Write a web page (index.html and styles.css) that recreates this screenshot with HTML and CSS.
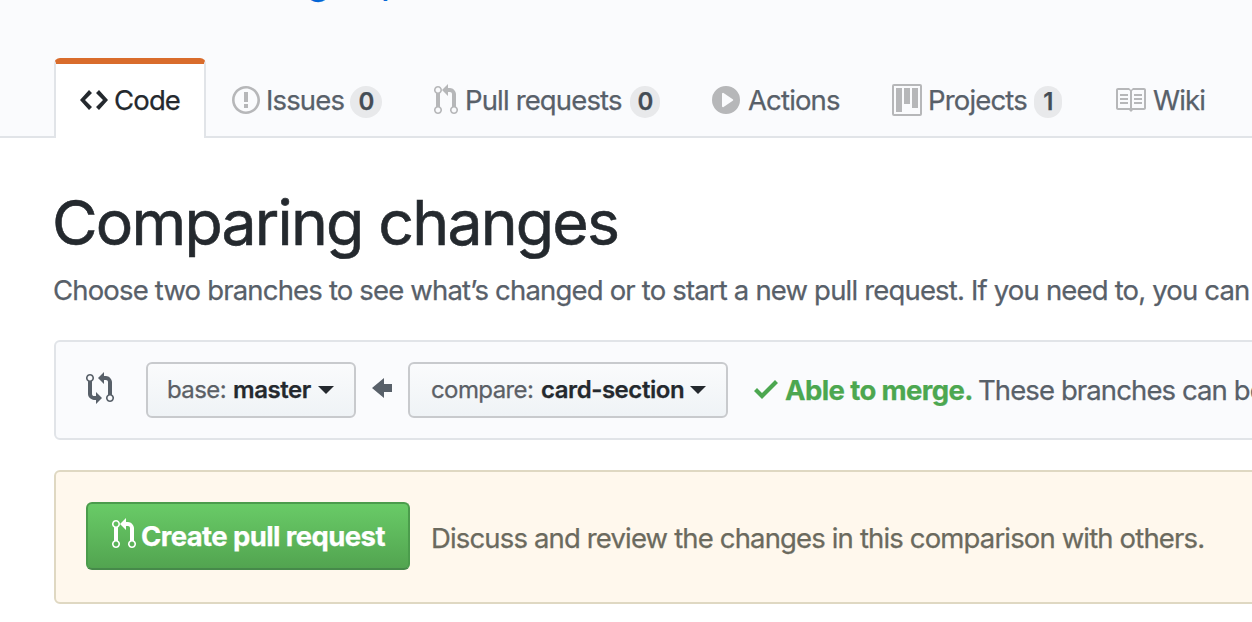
FILE: index.html
```
<!DOCTYPE html>
<html lang="en">
<head>
<meta charset="utf-8">
<title>Comparing changes</title>
<link rel="stylesheet" href="styles.css">
</head>
<body>
<svg class="defs" width="0" height="0">
  <symbol id="pr" viewBox="0 0 12 16"><path d="M11 11.28V5c-.03-.78-.34-1.47-.94-2.06C9.46 2.35 8.78 2.03 8 2H7V0L4 3l3 3V4h1c.27.02.48.11.69.31.21.2.3.42.31.69v6.28A1.993 1.993 0 0 0 10 15a1.993 1.993 0 0 0 1-3.72zm-1 2.92c-.66 0-1.2-.55-1.2-1.2 0-.65.55-1.2 1.2-1.2.65 0 1.2.55 1.2 1.2 0 .65-.55 1.2-1.2 1.2zM4 3c0-1.11-.89-2-2-2a1.993 1.993 0 0 0-1 3.72v6.56A1.993 1.993 0 0 0 2 15a1.993 1.993 0 0 0 1-3.72V4.72c.59-.34 1-.98 1-1.72zm-.8 10c0 .66-.55 1.2-1.2 1.2-.65 0-1.2-.55-1.2-1.2 0-.65.55-1.2 1.2-1.2.65 0 1.2.55 1.2 1.2zM2 4.2C1.34 4.2.8 3.65.8 3c0-.65.55-1.2 1.2-1.2.65 0 1.2.55 1.2 1.2 0 .65-.55 1.2-1.2 1.2z"/></symbol>
</svg>
<header class="repohead">
  <div class="repo-name"><a class="repo-owner">g</a><a>p</a></div>
  <nav class="tabs">
    <a class="tab tab-code selected"><svg width="28" height="32" viewBox="0 0 14 16"><path d="M9.5 3L8 4.5 11.5 8 8 11.5 9.5 13 14 8 9.5 3zm-5 0L0 8l4.5 5L6 11.5 2.5 8 6 4.5 4.5 3z"/></svg><span class="label">Code</span></a>
    <a class="tab tab-issues"><svg width="28" height="32" viewBox="0 0 14 16"><path d="M7 2.3c3.14 0 5.7 2.56 5.7 5.7s-2.56 5.7-5.7 5.7A5.71 5.71 0 0 1 1.3 8c0-3.14 2.56-5.7 5.7-5.7zM7 1C3.14 1 0 4.14 0 8s3.14 7 7 7 7-3.14 7-7-3.14-7-7-7zm1 3H6v5h2V4zm0 6H6v2h2v-2z"/></svg><span class="label">Issues</span><span class="counter">0</span></a>
    <a class="tab tab-pulls"><svg width="24" height="32"><use href="#pr"/></svg><span class="label">Pull requests</span><span class="counter">0</span></a>
    <a class="tab tab-actions"><svg width="28" height="32" viewBox="0 0 14 16"><path d="M14 8A7 7 0 1 1 0 8a7 7 0 0 1 14 0zm-8.223 3.482l4.599-3.066a.5.5 0 0 0 0-.832L5.777 4.518A.5.5 0 0 0 5 4.934v6.132a.5.5 0 0 0 .777.416z"/></svg><span class="label">Actions</span></a>
    <a class="tab tab-projects"><svg width="30" height="32" viewBox="0 0 15 16"><path fill-rule="evenodd" d="M10 12h3V2h-3v10zm-4-2h3V2H6v8zm-4 4h3V2H2v12zm-1 1h13V1H1v14zM14 0H1a1 1 0 0 0-1 1v14a1 1 0 0 0 1 1h13a1 1 0 0 0 1-1V1a1 1 0 0 0-1-1z" transform="matrix(1 0 0 1 0 0)"/></svg><span class="label">Projects</span><span class="counter">1</span></a>
    <a class="tab tab-wiki"><svg width="32" height="32" viewBox="0 0 16 16"><path d="M3 5h4v1H3V5zm0 3h4V7H3v1zm0 2h4V9H3v1zm11-5h-4v1h4V5zm0 2h-4v1h4V7zm0 2h-4v1h4V9zm2-6v9c0 .55-.45 1-1 1H9.5l-1 1-1-1H2c-.55 0-1-.45-1-1V3c0-.55.45-1 1-1h5.5l1 1 1-1H15c.55 0 1 .45 1 1zm-8 .5L7.5 3H2v9h6V3.5zm7-.5H9.5l-.5.5V12h6V3z"/></svg><span class="label">Wiki</span></a>
  </nav>
</header>
<main class="content">
  <h1 class="title">Comparing changes</h1>
  <p class="subtitle">Choose two branches to see what’s changed or to start a new pull request. If you need to, you can</p>
  <section class="range">
    <svg class="compare-icon" width="28" height="32" viewBox="0 0 14 16"><path d="M5 12H4c-.27-.02-.48-.11-.69-.31-.21-.2-.3-.42-.31-.69V4.72A1.993 1.993 0 0 0 2 1a1.993 1.993 0 0 0-1 3.72V11c.03.78.34 1.47.94 2.06.6.59 1.28.91 2.06.94h1v2l3-3-3-3v2zM2 1.8c.66 0 1.2.55 1.2 1.2 0 .65-.55 1.2-1.2 1.2C1.35 4.2.8 3.65.8 3c0-.65.55-1.2 1.2-1.2zm11 9.48V5c-.03-.78-.34-1.47-.94-2.06-.6-.59-1.28-.91-2.06-.94H9V0L6 3l3 3V4h1c.27.02.48.11.69.31.21.2.3.42.31.69v6.28A1.993 1.993 0 0 0 12 15a1.993 1.993 0 0 0 1-3.72zm-1 2.92c-.66 0-1.2-.55-1.2-1.2 0-.65.55-1.2 1.2-1.2.65 0 1.2.55 1.2 1.2 0 .65-.55 1.2-1.2 1.2z"/></svg>
    <button class="select base"><span class="key">base:</span><b>master</b><i class="caret"></i></button>
    <svg class="arrow" width="20" height="32" viewBox="0 0 10 16"><path d="M6 3L0 8l6 5v-3h4V6H6V3z"/></svg>
    <button class="select compare"><span class="key">compare:</span><b>card-section</b><i class="caret"></i></button>
    <div class="merge"><svg width="24" height="32" viewBox="0 0 12 16"><path d="M12 5l-8 8-4-4 1.5-1.5L4 10l6.5-6.5L12 5z"/></svg><strong>Able to merge.</strong><span class="merge-note">These branches can be</span></div>
  </section>
  <section class="create">
    <button class="primary"><svg width="24" height="32"><use href="#pr"/></svg><span>Create pull request</span></button>
    <p class="hint">Discuss and review the changes in this comparison with others.</p>
  </section>
</main>
</body>
</html>
```
FILE: styles.css
```
* { box-sizing: border-box; }
body {
  margin: 0;
  height: 622px;
  overflow: hidden;
  background: #fff;
  color: #586069;
  font-family: Inter, "Liberation Sans", sans-serif;
  font-size: 27.5px;
  letter-spacing: -0.85px;
  white-space: nowrap;
  -webkit-text-stroke: 0.25px currentColor;
}
svg { display: block; flex: none; fill: currentColor; }
.defs { position: absolute; }
h1, p { margin: 0; }
button { font: inherit; letter-spacing: inherit; }

.repohead {
  height: 138px;
  background: #fafbfd;
  border-bottom: 2px solid #e1e4e8;
}
.repo-name {
  display: flex;
  height: 58px;
  padding-left: 307px;
  overflow: hidden;
  color: #0366d6;
  font-size: 36px;
  line-height: 40px;
}
.repo-name a { margin-top: -39px; }
.repo-owner { width: 74px; font-weight: 500; }
.tabs { display: flex; height: 80px; padding-left: 54px; }
.tab { display: flex; flex: none; height: 80px; padding-top: 26px; }
.tab svg { fill: #b6b7b9; }
.label { line-height: 33px; }
.tab-code { width: 152px; padding-left: 24px; }
.selected {
  padding-top: 20px;
  border: 2px solid #e1e4e8;
  border-top: 6px solid #d96c2c;
  border-bottom: 0;
  border-radius: 6px 6px 0 0;
  background: #fff;
  color: #24292e;
}
.selected svg { fill: #24292e; }
.tab-code .label { margin-left: 6px; }
.tab-issues { width: 202px; padding-left: 26px; }
.tab-issues .label { width: 84px; margin-left: 6px; }
.tab-pulls { width: 278px; padding-left: 26px; }
.tab-pulls .label { width: 165px; margin-left: 7px; }
.tab-actions { width: 180px; padding-left: 26px; }
.tab-actions .label { margin-left: 8px; }
.tab-projects { width: 222px; padding-left: 26px; }
.tab-projects .label { width: 106px; margin-left: 6px; }
.tab-wiki { padding-left: 26px; }
.tab-wiki .label { margin-left: 7px; }
.counter {
  width: 32px;
  height: 32px;
  margin-top: 2px;
  border-radius: 16px;
  background: #e8e9eb;
  color: #444d56;
  font-size: 24px;
  font-weight: 600;
  line-height: 32px;
  text-align: center;
}
.tab-pulls .counter { width: 30px; }
.tab-projects .counter { width: 28px; }

.content { padding: 48px 0 0 54px; }
.title {
  height: 78px;
  margin-left: -2px;
  color: #24292e;
  font-size: 62.5px;
  font-weight: 400;
  line-height: 73px;
  letter-spacing: -1.8px;
  -webkit-text-stroke-width: 0.6px;
}
.subtitle { height: 42px; margin: 6px 0 28px -1px; line-height: 41px; letter-spacing: -0.825px; }
.range, .create {
  display: flex;
  width: 1240px;
  border: 2px solid #e1e4e8;
  border-radius: 6px;
}
.range { height: 100px; padding: 20px 0 0 30px; background: #fafbfd; }
.compare-icon { margin-top: 10px; }
.select {
  display: flex;
  flex: none;
  height: 56px;
  padding: 0 0 0 19px;
  border: 2px solid #c8cacd;
  border-radius: 6px;
  background: linear-gradient(#fafbfc, #eff3f6);
  color: #24292e;
  font-size: 24px;
  line-height: 51px;
  letter-spacing: -0.6px;
}
.select b { font-weight: 600; letter-spacing: -0.45px; }
.key { color: #5b6066; }
.base { width: 210px; margin-left: 32px; }
.base .key { width: 66px; text-align: left; }
.base b { width: 79px; text-align: left; }
.compare { width: 320px; margin-left: 16px; padding-left: 21px; }
.compare .key { width: 110px; text-align: left; }
.compare b { width: 143px; text-align: left; }
.caret {
  width: 0;
  height: 0;
  margin: 22px 0 0 6px;
  border: 8px solid transparent;
  border-top-color: #24292e;
  border-bottom: 0;
}
.arrow { margin: 10px 0 0 16px; }
.merge { display: flex; height: 56px; margin-left: 26px; line-height: 56px; }
.merge svg { margin-top: 11px; fill: #4ca750; }
.merge strong { width: 187px; margin-left: 7px; color: #4ca750; font-weight: 660; letter-spacing: -0.6px; }
.merge-note { margin-left: 6px; letter-spacing: -0.9px; }

.create {
  height: 134px;
  margin-top: 30px;
  padding: 30px 0 0 30px;
  border-color: #dfd8c2;
  background: #fff8ed;
}
.primary {
  display: flex;
  width: 324px;
  height: 68px;
  padding: 15px 0 0 24px;
  border: 2px solid #4b9c4c;
  border-bottom-color: #46894a;
  border-radius: 6px;
  background: linear-gradient(#69cb67, #52a450);
  color: #fff;
  font-weight: 660;
  line-height: 34px;
  letter-spacing: -0.6px;
}
.primary svg { margin-top: -1px; }
.primary span { margin-left: 5px; }
.hint { margin-left: 21px; color: #6b6a5e; line-height: 73px; }
```
